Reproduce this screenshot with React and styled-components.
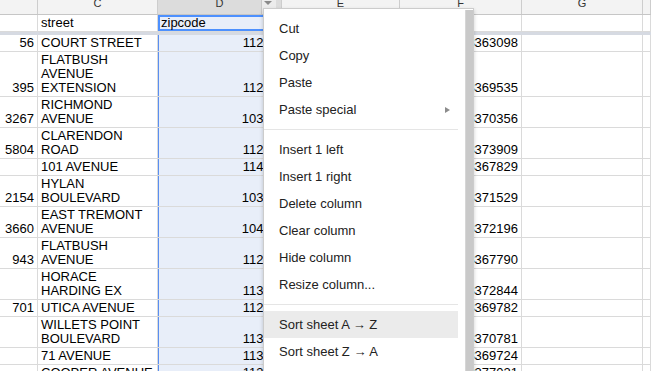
import React from "react";
import styled, { createGlobalStyle } from "styled-components";

const GlobalStyle = createGlobalStyle`
	html, body {
		margin: 0;
		padding: 0;
		background: #fff;
		overflow: hidden;
	}
	body {
		font-family: "Liberation Sans", Arial, sans-serif;
	}
`;

const widths = [38, 120, 124, 118, 122, 121, 40];

const rows = [
	{ num: "56", street: ["COURT STREET"], zip: "11201", phone: "7183363098" },
	{ num: "395", street: ["FLATBUSH", "AVENUE", "EXTENSION"], zip: "11217", phone: "7183369535" },
	{ num: "3267", street: ["RICHMOND", "AVENUE"], zip: "10314", phone: "7183370356" },
	{ num: "5804", street: ["CLARENDON", "ROAD"], zip: "11203", phone: "7183373909" },
	{ num: "", street: ["101 AVENUE"], zip: "11419", phone: "7183367829" },
	{ num: "2154", street: ["HYLAN", "BOULEVARD"], zip: "10306", phone: "7183371529" },
	{ num: "3660", street: ["EAST TREMONT", "AVENUE"], zip: "10465", phone: "7183372196" },
	{ num: "943", street: ["FLATBUSH", "AVENUE"], zip: "11226", phone: "7183367790" },
	{ num: "", street: ["HORACE", "HARDING EX"], zip: "11368", phone: "7183372844" },
	{ num: "701", street: ["UTICA AVENUE"], zip: "11203", phone: "7183369782" },
	{ num: "", street: ["WILLETS POINT", "BOULEVARD"], zip: "11368", phone: "7183370781" },
	{ num: "", street: ["71 AVENUE"], zip: "11375", phone: "7183369724" },
	{ num: "", street: ["COOPER AVENUE"], zip: "11385", phone: "7183377021" },
];

const menuItems = [
	{ label: "Cut" },
	{ label: "Copy" },
	{ label: "Paste" },
	{ label: "Paste special", sub: true },
	{ sep: true },
	{ label: "Insert 1 left" },
	{ label: "Insert 1 right" },
	{ label: "Delete column" },
	{ label: "Clear column" },
	{ label: "Hide column" },
	{ label: "Resize column..." },
	{ sep: true },
	{ label: "Sort sheet A \u2192 Z", hover: true },
	{ label: "Sort sheet Z \u2192 A" },
];

const Sheet = styled.div`
	position: relative;
	width: 651px;
	height: 371px;
	overflow: hidden;
	font-family: "Liberation Sans", Arial, sans-serif;
	font-size: 13px;
	color: #000;
`;

const HeaderRow = styled.div`
	display: flex;
	height: 15px;
	box-sizing: border-box;
	border-bottom: 1px solid #c6c6c6;
	background: #f3f3f3;
`;

const HeaderCell = styled.div`
	position: relative;
	flex: ${(p) => (p.$grow ? "1" : "none")};
	box-sizing: border-box;
	border-right: 1px solid #cdcdcd;
	background: ${(p) => (p.$active ? "#dcdcdc" : "#f3f3f3")};
	text-align: center;
	font-size: 11px;
	line-height: 6px;
	color: #333;
	overflow: hidden;
`;

const DropButton = styled.div`
	position: absolute;
	right: 5px;
	top: 0;
	width: 14px;
	height: 14px;
	background: #ececec;
	border-left: 1px solid #c8c8c8;

	&::after {
		content: "";
		position: absolute;
		left: 2px;
		top: 1px;
		border-left: 4px solid transparent;
		border-right: 4px solid transparent;
		border-top: 4px solid #8a8a8a;
	}
`;

const Row = styled.div`
	display: flex;
	box-sizing: border-box;
	border-bottom: 1px solid #dadada;
	min-height: ${(p) => p.$min || 0}px;
`;

const Cell = styled.div`
	flex: ${(p) => (p.$grow ? "1" : "none")};
	box-sizing: border-box;
	display: flex;
	flex-direction: column;
	justify-content: flex-end;
	align-items: ${(p) => (p.$right ? "flex-end" : "flex-start")};
	padding: 1px 3px;
	border-right: 1px solid #dadada;
	line-height: 14px;
	white-space: nowrap;
	overflow: hidden;
	background: ${(p) => (p.$selected ? "#e8eef9" : "#fff")};
	box-shadow: ${(p) =>
		p.$active
			? "inset 0 0 0 2px #4d90fe"
			: p.$selected
			? "inset 1px 0 0 #5b8ff0"
			: "none"};
`;

const FrozenBar = styled.div`
	height: 3px;
	background: #d6dae2;
`;

const Menu = styled.div`
	position: absolute;
	left: 263px;
	top: 8px;
	width: 211px;
	height: 390px;
	box-sizing: border-box;
	display: flex;
	background: #fff;
	border: 1px solid rgba(0, 0, 0, 0.2);
	box-shadow: 0 2px 4px rgba(0, 0, 0, 0.2);
	font-size: 13px;
	color: #222;
`;

const MenuList = styled.div`
	width: 194px;
	padding: 6px 0;
	margin-right: 7px;
`;

const Scrollbar = styled.div`
	width: 8px;
	margin-top: 1px;
	background: #c9c9c9;
	border-left: 1px solid #d6d6d6;
	box-sizing: border-box;
`;

const Item = styled.div`
	display: flex;
	align-items: center;
	justify-content: space-between;
	height: 27px;
	padding: 0 8px 0 15px;
	background: ${(p) => (p.$hover ? "#ebebeb" : "transparent")};
`;

const SubArrow = styled.span`
	width: 0;
	height: 0;
	border-left: 5px solid #8c8c8c;
	border-top: 3.5px solid transparent;
	border-bottom: 3.5px solid transparent;
`;

const Separator = styled.div`
	height: 1px;
	margin: 6px 0;
	background: #e5e5e5;
`;

const cols = (cells) =>
	cells.map((c, i) => (
		<Cell
			key={i}
			$grow={i === widths.length - 1}
			style={i === widths.length - 1 ? undefined : { width: widths[i] }}
			{...c.props}
		>
			{c.content}
		</Cell>
	));

export default function App() {
	const letters = ["", "C", "D", "E", "F", "G", ""];

	return (
		<Sheet>
			<GlobalStyle />
			<HeaderRow>
				{letters.map((l, i) => (
					<HeaderCell
						key={i}
						$active={l === "D"}
						$grow={i === letters.length - 1}
						style={i === letters.length - 1 ? undefined : { width: widths[i] }}
					>
						{l}
						{l === "D" && <DropButton />}
					</HeaderCell>
				))}
			</HeaderRow>

			<Row $min={16}>
				{cols([
					{},
					{ content: "street" },
					{ content: "zipcode", props: { $active: true, $selected: true } },
					{},
					{},
					{},
					{},
				])}
			</Row>
			<FrozenBar />

			{rows.map((r, idx) => (
				<Row key={idx}>
					{cols([
						{ content: r.num, props: { $right: true } },
						{ content: r.street.map((s) => <div key={s}>{s}</div>) },
						{ content: r.zip, props: { $right: true, $selected: true } },
						{},
						{ content: r.phone, props: { $right: true } },
						{},
						{},
					])}
				</Row>
			))}

			<Menu>
				<MenuList>
					{menuItems.map((m, i) =>
						m.sep ? (
							<Separator key={i} />
						) : (
							<Item key={i} $hover={m.hover}>
								<span>{m.label}</span>
								{m.sub && <SubArrow />}
							</Item>
						)
					)}
				</MenuList>
				<Scrollbar />
			</Menu>
		</Sheet>
	);
}
